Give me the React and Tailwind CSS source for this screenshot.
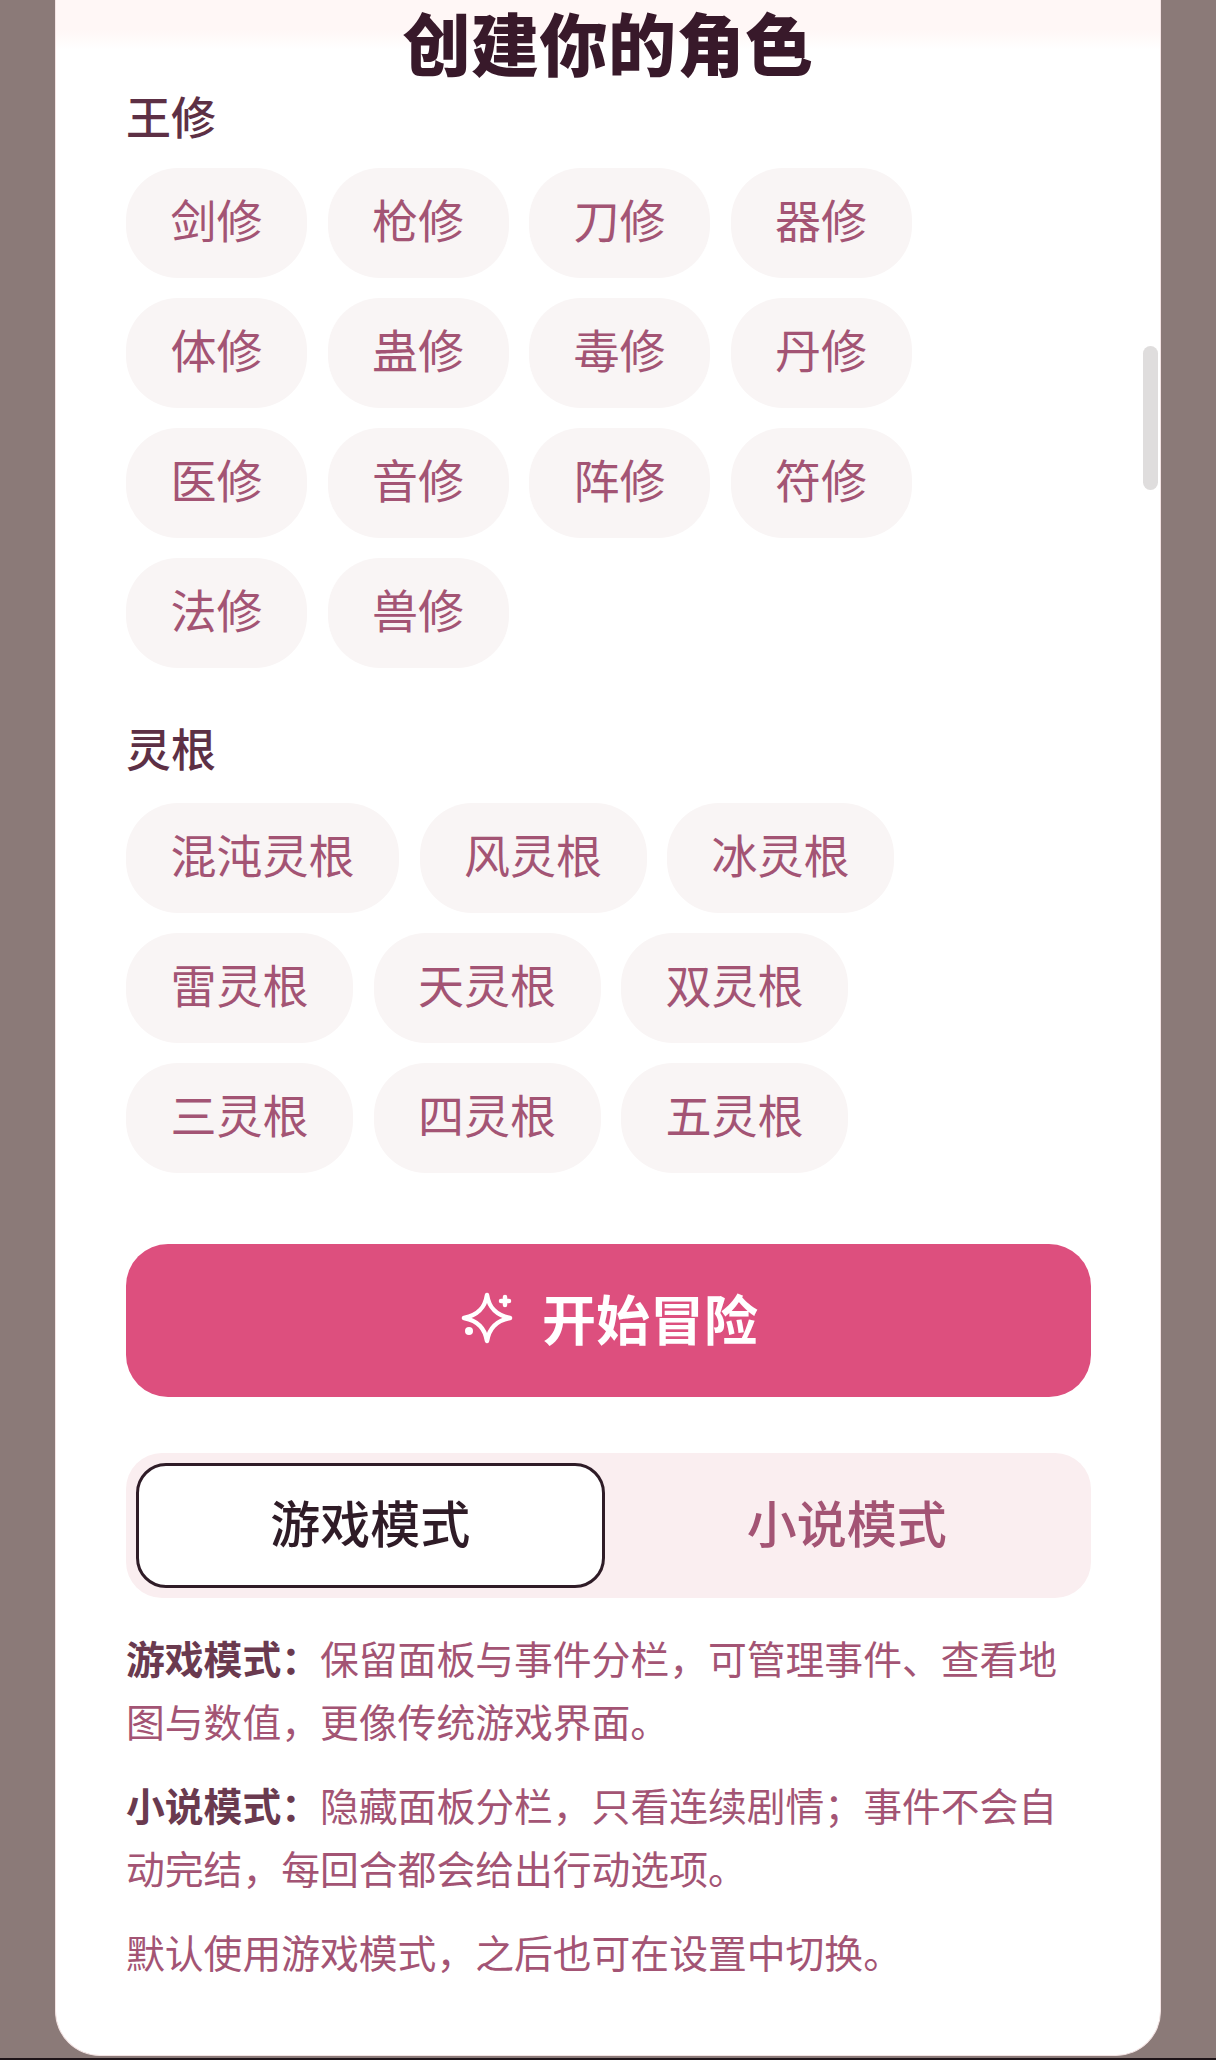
const cultivation = [
  '剑修', '枪修', '刀修', '器修',
  '体修', '蛊修', '毒修', '丹修',
  '医修', '音修', '阵修', '符修',
  '法修', '兽修',
];

const roots = [
  '混沌灵根', '风灵根', '冰灵根',
  '雷灵根', '天灵根', '双灵根',
  '三灵根', '四灵根', '五灵根',
];

function Chip({ label }) {
  return (
    <button className="h-[110px] px-[44.5px] pb-[10px] rounded-[52px] bg-[#f9f5f5] text-[#a35474] text-[46px] leading-none">
      {label}
    </button>
  );
}

function ChipGroup({ items }) {
  return (
    <div className="flex flex-wrap gap-x-[20.5px] gap-y-[20px]">
      {items.map((item) => (
        <Chip key={item} label={item} />
      ))}
    </div>
  );
}

// four point star with the small plus and dot, as on the start button
function StarIcon() {
  return (
    <svg width="56" height="56" viewBox="0 0 56 56" fill="none" stroke="currentColor" strokeWidth="4.5" strokeLinejoin="round" strokeLinecap="round">
      <path d="M28 5C30 17 36 25 51 28C36 31 30 39 28 51C26 39 20 31 5 28C20 25 26 17 28 5Z" />
      <path d="M46 7V15M42 11H50" />
      <circle cx="10" cy="41" r="4" fill="currentColor" stroke="none" />
    </svg>
  );
}

export default function App() {
  return (
    <div className="w-[1216px] h-[2060px] overflow-hidden bg-[#8b7a78] [font-family:'Noto_Sans_CJK_SC','Noto_Sans',sans-serif]">
      <div className="px-[55px] h-[2058px]">
        {/* Character creation card */}
        <div className="relative h-[2056px] rounded-b-[45px] bg-white border-x border-b border-[#f3e3e3]">
          <h1 className="h-[92px] pb-[8px] flex items-center justify-center bg-[linear-gradient(#fff7f6_0,#fff7f6_30px,#ffffff_50px)] text-[68px] font-black tracking-[0.5px] leading-none text-[#38192a]">
            创建你的角色
          </h1>

          <div className="pl-[70px] pr-[69px]">
            <h2 className="h-[52px] mb-[24px] -translate-y-[2px] text-[45px] leading-[52px] font-medium text-[#5d3045]">王修</h2>
            <ChipGroup items={cultivation} />

            <h2 className="h-[52px] mt-[57px] mb-[26px] -translate-y-[3px] text-[45px] leading-[52px] font-medium text-[#5d3045]">灵根</h2>
            <ChipGroup items={roots} />

            <button className="mt-[71px] w-full h-[153px] pb-[6px] flex items-center justify-center gap-[27px] rounded-[42px] bg-[#dd4f7e] text-white text-[54px] font-bold leading-none">
              <StarIcon />
              开始冒险
            </button>

            {/* Mode switch */}
            <div className="mt-[56px] h-[145px] p-[10px] grid grid-cols-2 gap-2 rounded-[36px] bg-[#faeef0]">
              <button className="pb-[10px] rounded-[30px] bg-white border-[3px] border-[#2f1c27] text-[50px] font-medium leading-none text-[#2f1c27]">
                游戏模式
              </button>
              <button className="pb-[10px] rounded-[30px] text-[50px] font-medium leading-none text-[#a35474]">
                小说模式
              </button>
            </div>

            <div className="mt-[28px] text-[38.8px] leading-[63px] text-[#a35474]">
              <p className="mb-[21px]">
                <strong className="font-bold text-[#6a3a4f]">游戏模式：</strong>
                保留面板与事件分栏，可管理事件、查看地图与数值，更像传统游戏界面。
              </p>
              <p className="mb-[21px]">
                <strong className="font-bold text-[#6a3a4f]">小说模式：</strong>
                隐藏面板分栏，只看连续剧情；事件不会自动完结，每回合都会给出行动选项。
              </p>
              <p>默认使用游戏模式，之后也可在设置中切换。</p>
            </div>
          </div>

          {/* Scrollbar thumb */}
          <div className="absolute right-[2px] top-[346px] w-[15px] h-[144px] rounded-full bg-[#dfdddd]" />
        </div>
      </div>
      <div className="h-[2px] bg-[#1e1418]" />
    </div>
  );
}
